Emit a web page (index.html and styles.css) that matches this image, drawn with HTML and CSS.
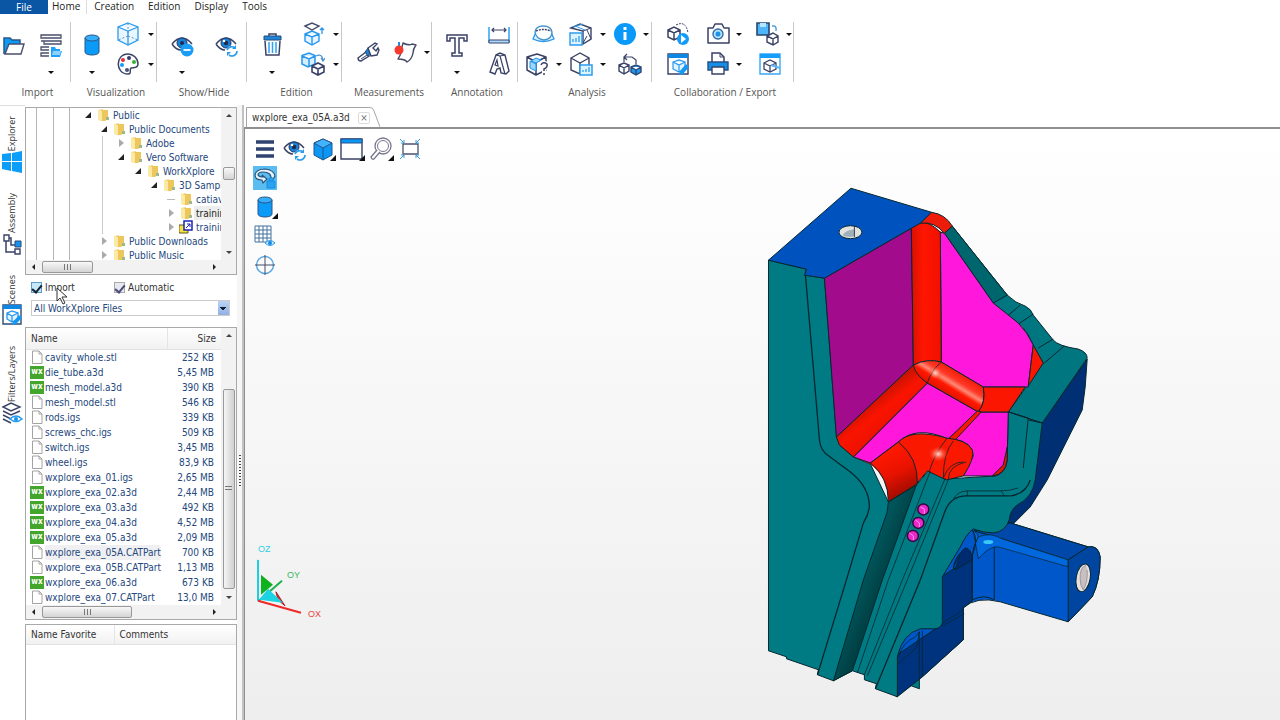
FILE: index.html
```html
<!DOCTYPE html>
<html lang="en">
<head>
    <meta charset="UTF-8">
    <meta name="viewport" content="width=device-width, initial-scale=1.0">
    <title>WorkXplore</title>
    <link rel="stylesheet" href="styles.css">
</head>
<body>
    <!-- shared icons -->
    <svg class="defs" aria-hidden="true">
        <symbol id="i-cylinder" viewBox="0 0 24 24"><path d="M5 5v14c0 4 14 4 14 0V5" fill="#0a9bf8" stroke="#2b5585"/><ellipse cx="12" cy="5" rx="7" ry="3" fill="#35aefb" stroke="#2b5585"/></symbol>
        <symbol id="i-eye-refresh" viewBox="0 0 24 24"><path d="M2 11Q12-1 22 11M2 11q4 6 9 6" fill="none" stroke="#3a4266" stroke-width="1.500"/><circle cx="12" cy="10" r="5" fill="#1583dd" stroke="#26365f"/><circle cx="12" cy="10" r="2.300" fill="#222a48"/><circle cx="10" cy="8" r="1.300" fill="#fff"/><circle cx="18" cy="18" r="5.500" fill="#fff"/><path d="M13 17a5 5 0 0 1 8-2M23 18a5 5 0 0 1-8 4" fill="none" stroke="#2a9cf0" stroke-width="1.600"/><path d="M22 12v4h-4zM13 23v-4h4z" fill="#2a9cf0"/></symbol>
        <symbol id="i-folder" viewBox="0 0 14 14"><path d="M2 2l5-1v12l-5-1z" fill="#f4d77a"/><path d="M5 2h7v9l-3 2H5z" fill="#edc65c"/><path d="M2 2l4 1v10l-4-1z" fill="#fbe9a4"/><path d="M10 9h3v3h-3z" fill="#9db88f"/></symbol>
        <symbol id="i-page" viewBox="0 0 14 14"><path d="M2.500 1h6.500l3 3v9.500H2.500z" fill="#fff" stroke="#a3a3a3"/><path d="M9 1v3h3" fill="none" stroke="#a3a3a3"/></symbol>
    </svg>

    <nav class="menu">
        <button class="file">File</button>
        <a href="#" class="current">Home</a>
        <a href="#">Creation</a>
        <a href="#">Edition</a>
        <a href="#">Display</a>
        <a href="#">Tools</a>
    </nav>

    <header class="ribbon">
        <section class="group g-import">
            <div class="tools">
                <div class="big"><button aria-label="Open"><svg viewBox="0 0 24 24"><path d="M2 21V5h6l2 2h8v4" fill="#0a9bf8" stroke="#2b5585" stroke-width="1.500"/><path d="M3 21l4-10h15l-3 10z" fill="#fff" stroke="#4a5070" stroke-width="1.400"/></svg></button></div>
                <div class="big"><button aria-label="Import list"><svg viewBox="0 0 24 24"><path d="M2 2h20v3H2zM2 8h20v3H5v-3M10 14H2v3h8M10 20H2v3h8" fill="none" stroke="#4a4f6c" stroke-width="1.300"/><path d="M12 14h4l1 2h4v2h2l-2 6h-9z" fill="#1da1fa"/><path d="M14 18h8l-1 4h-8z" fill="#8fd2ff"/></svg></button><button class="caret" aria-label="More"></button></div>
            </div>
            <h2>Import</h2>
        </section>
        <section class="group g-vis">
            <div class="tools">
                <div class="big"><button aria-label="Shading"><svg><use href="#i-cylinder"/></svg></button><button class="caret" aria-label="More"></button></div>
                <div class="stack">
                    <div class="tool"><button aria-label="Views"><svg viewBox="0 0 24 24"><path d="M12 1l10 4v13l-10 5-10-5V5zM2 5l10 4 10-4M12 9v14" fill="#eaf6ff" stroke="#2e9bea" stroke-width="1.300"/><path d="M12 1v12M12 14l-10 4M12 14l10 4" stroke="#4b93c9" stroke-dasharray="2 2"/></svg></button><button class="caret" aria-label="More"></button></div>
                    <div class="tool"><button aria-label="Colours"><svg viewBox="0 0 24 24"><path d="M12 2C-1 2-1 22 12 22c4 0 1-4 3-6 2-1 7 1 7-4 0-6-5-10-10-10z" fill="#fff" stroke="#3a4266" stroke-width="1.500"/><circle cx="7" cy="8" r="2" fill="#ee2a36"/><circle cx="13" cy="6" r="2" fill="#333c67"/><circle cx="18" cy="10" r="2" fill="#39b233"/><circle cx="6" cy="13" r="2" fill="#139cf5"/><circle cx="11" cy="18" r="2" fill="#4a5278"/></svg></button><button class="caret" aria-label="More"></button></div>
                </div>
            </div>
            <h2>Visualization</h2>
        </section>
        <section class="group g-show">
            <div class="tools">
                <div class="big"><button aria-label="Hide"><svg viewBox="0 0 24 24"><path d="M2 11Q12-1 22 11M2 11q4 6 9 6" fill="none" stroke="#3a4266" stroke-width="1.500"/><circle cx="12" cy="10" r="5" fill="#1583dd" stroke="#26365f"/><circle cx="12" cy="10" r="2" fill="#222a48"/><circle cx="17" cy="17" r="6.500" fill="#1b9df7"/><path d="M13.500 17h7" stroke="#fff" stroke-width="1.800"/></svg></button><button class="caret" aria-label="More"></button></div>
                <div class="big"><button aria-label="Invert visibility"><svg><use href="#i-eye-refresh"/></svg></button></div>
            </div>
            <h2>Show/Hide</h2>
        </section>
        <section class="group g-edit">
            <div class="tools">
                <div class="big"><button aria-label="Delete"><svg viewBox="0 0 24 24"><path d="M9 3V1h7v2" fill="none" stroke="#3a4266" stroke-width="1.500"/><path d="M5 8l1 14h13l1-14" fill="#fff" stroke="#3a4266" stroke-width="1.500"/><path d="M4 3h17v4H4z" fill="#1c86d8" stroke="#2b4a7a"/><path d="M9 9v11M12.500 9v11M16 9v11" stroke="#2da1f3" stroke-width="1.500"/></svg></button><button class="caret" aria-label="More"></button></div>
                <div class="stack">
                    <div class="tool"><button aria-label="Explode"><svg viewBox="0 0 24 24"><path d="M4 12l7-3 7 3v7l-7 4-7-4zM4 12l7 3 7-3M11 15v8" fill="#e6f5ff" stroke="#2797ed" stroke-width="1.400"/><path d="M4 4l7-3 7 3-7 4z" fill="#fff" stroke="#444a68" stroke-width="1.400"/><path d="M21 12V6m-2 2l2-2 2 2" fill="none" stroke="#2797ed" stroke-width="1.300"/></svg></button><button class="caret" aria-label="More"></button></div>
                    <div class="tool"><button aria-label="Move"><svg viewBox="0 0 24 24"><path d="M1 3.500L8 1l6 2.500V12l-7 3-6-3zM1 4l7 3 6-3M8 7v8" fill="#d5efff" stroke="#2797ed" stroke-width="1.500"/><path d="M11 14l6-3 6 3v6l-6 3-6-3zM11 14l6 3 6-3M17 17v6" fill="#fff" stroke="#3a4266" stroke-width="1.600"/><path d="M15 4q6-3 7 4m-2-2l2 3 2-3" fill="none" stroke="#4b96d0" stroke-width="1.300"/></svg></button><button class="caret" aria-label="More"></button></div>
                </div>
            </div>
            <h2>Edition</h2>
        </section>
        <section class="group g-meas">
            <div class="tools">
                <div class="tool"><button aria-label="Measure"><svg viewBox="0 0 24 24"><path d="M2 18l8-6 3 4-8 5q-3 0-3-3z" fill="#fff" stroke="#3a4266" stroke-width="1.400"/><path d="M5 19l6-4" stroke="#3a4266"/><path d="M9 12l3-4 4 5-4 3z" fill="#1b7fce" stroke="#2b4a7a"/><path d="M12 8l7-5 2 1-4 4 3 3 2-3 1 2-2 5-6 1z" fill="#fff" stroke="#3a4266" stroke-width="1.400"/></svg></button></div>
                <div class="tool"><button aria-label="Point coordinates"><svg viewBox="0 0 24 24"><path d="M9 3q6 3 9 1l4 1q-3 4-3 8-1 6-6 9-2-3-9-3 3-4 3-8z" fill="#fff" stroke="#454a64" stroke-width="1.400" stroke-linejoin="round"/><path d="M5 2v6" stroke="#208de0" stroke-width="2"/><circle cx="5" cy="10" r="4.500" fill="#f5392c"/></svg></button><button class="caret" aria-label="More"></button></div>
            </div>
            <h2>Measurements</h2>
        </section>
        <section class="group g-anno">
            <div class="tools">
                <div class="big"><button aria-label="Text"><svg viewBox="0 0 24 24"><path d="M2 2h20v6h-3V5h-5v15h3v3H7v-3h3V5H5v3H2z" fill="#fff" stroke="#3a4266" stroke-width="1.500"/></svg></button><button class="caret" aria-label="More"></button></div>
                <div class="stack">
                    <div class="tool"><button aria-label="Dimension"><svg viewBox="0 0 24 24"><path d="M2 5v16M22 5v16" stroke="#3ba8f4" stroke-width="1.600"/><path d="M5 8h14M7 6L5 8l2 2M17 6l2 2-2 2" fill="none" stroke="#3a4266" stroke-width="1.200"/><path d="M2 18h20v3H2z" fill="#acd9ff" stroke="#3a4266"/></svg></button></div>
                    <div class="tool"><button aria-label="Label"><svg viewBox="0 0 24 24"><path d="M9 3l4-2 5 2 4 16-3 3-5-1-1-5-3 1-2 5-5-2z" fill="#fff" stroke="#3a4266" stroke-width="1.400"/><path d="M9 3l4 1 5 18M13 4l5-1M8 13l3 1-1-6z" fill="none" stroke="#3a4266" stroke-width="1.200"/></svg></button></div>
                </div>
            </div>
            <h2>Annotation</h2>
        </section>
        <section class="group g-ana">
            <div class="tools">
                <div class="stack first">
                    <div class="tool"><button aria-label="Sphere analysis"><svg viewBox="0 0 24 24"><path d="M5 10L2 17q10 5 21 0l-3-7" fill="#dff1ff" stroke="#2797ed" stroke-width="1.300"/><path d="M4 10q1-6 8-6 8 0 9 6 0 7-8 8-8-1-9-8z" fill="#fff" stroke="#4293cc" stroke-width="1.400"/><path d="M5 9q7-3 15 0" fill="none" stroke="#3a4266" stroke-width="1.400" stroke-dasharray="2 1"/></svg></button></div>
                    <div class="tool"><button aria-label="Inspect"><svg viewBox="0 0 24 24"><path d="M12 2l9 3v13l-10 5-9-5V5zM2 5l9 5 10-5M11 10v13" fill="#fff" stroke="#3a4266" stroke-width="1.500" stroke-linejoin="round"/><path d="M5 9l6 3v7l-6-3zM11 6l5 2-5 3-5-2z" fill="#9ad7ff" stroke="#1e93eb"/><path d="M16 13q2-4 6-1 1 3-3 5v5" fill="none" stroke="#fff" stroke-width="4"/><path d="M16 13q2-4 6-1 1 3-3 5v2M19 21v2" fill="none" stroke="#3a4266" stroke-width="1.500"/></svg></button><button class="caret" aria-label="More"></button></div>
                </div>
                <div class="stack">
                    <div class="tool"><button aria-label="Thickness"><svg viewBox="0 0 24 24"><path d="M2 6l9-4 11 4v11l-8 5V9L2 6z" fill="#fff" stroke="#3a4266" stroke-width="1.400"/><path d="M14 9l8-3M18 8l4 9M14 21l4-7" stroke="#3a4266"/><path d="M6 4l10 4M4 5l10-3" stroke="#2c9ced"/><path d="M1 11h12v12H1z" fill="#dff3ff" stroke="#2c9ced" stroke-width="1.400"/><path d="M4 20v-3M7 20v-4M10 20v-6" stroke="#2c9ced" stroke-width="1.300"/></svg></button><button class="caret" aria-label="More"></button></div>
                    <div class="tool"><button aria-label="Draft"><svg viewBox="0 0 24 24"><path d="M2 6l9-5 9 5v12l-9 4-9-4zM2 6l9 5 9-5M11 11v11" fill="#fff" stroke="#3a4266" stroke-width="1.400"/><path d="M11 13h12v10H11z" fill="#dff3ff" stroke="#2c9ced" stroke-width="1.500"/><path d="M14 20v-2M17 20v-3M20 20v-5" stroke="#2c9ced" stroke-width="1.300"/></svg></button><button class="caret" aria-label="More"></button></div>
                </div>
                <div class="stack last">
                    <div class="tool"><button aria-label="Information"><svg viewBox="0 0 24 24"><circle cx="12" cy="12" r="11" fill="#0a99f8"/><path d="M12 10v8M12 5v3" stroke="#fff" stroke-width="3"/></svg></button><button class="caret" aria-label="More"></button></div>
                    <div class="tool shift"><button aria-label="Compare"><svg viewBox="0 0 24 24"><path d="M1 13l5-2 5 2v6l-5 3-5-3zM1 13l5 3 5-3M6 16v6" fill="#fff" stroke="#3a4266" stroke-width="1.400"/><path d="M13 15l5-2 5 2v5l-5 3-5-3zM13 15l5 3 5-3M18 18v5" fill="#2198ee" stroke="#2b4a7a" stroke-width="1.400"/><path d="M6 10V5h8l4 3v4M9 2L6 5l3 3" fill="none" stroke="#3a4266" stroke-width="1.200"/></svg></button></div>
                </div>
            </div>
            <h2>Analysis</h2>
        </section>
        <section class="group g-collab">
            <div class="tools">
                <div class="stack first">
                    <div class="tool"><button aria-label="Animate"><svg viewBox="0 0 24 24"><path d="M2 8l6-3 6 3v7l-6 3-6-3zM2 8l6 3 6-3M8 11v7" fill="#fff" stroke="#3a4266" stroke-width="1.500"/><path d="M10 3q10-5 12 8" fill="none" stroke="#3a4266" stroke-dasharray="2 1"/><circle cx="17" cy="17" r="6" fill="#149bf7"/><path d="M15 13l5 4-5 4z" fill="#fff"/></svg></button></div>
                    <div class="tool"><button aria-label="Edit scene"><svg viewBox="0 0 24 24"><path d="M2 2h20v20H2z" fill="#fff" stroke="#3a4266" stroke-width="1.400"/><path d="M2 2h20v4H2z" fill="#0e87e2"/><path d="M7 10l6-2 6 2v7l-6 3-6-3zM7 10l6 3 6-3M13 13v7" fill="#e2f4ff" stroke="#2797ed" stroke-width="1.200"/><path d="M14 19l6-7 3 3-6 7-4 1z" fill="#1598f4"/></svg></button></div>
                </div>
                <div class="stack">
                    <div class="tool"><button aria-label="Snapshot"><svg viewBox="0 0 24 24"><path d="M2 6h5l2-4h7l2 4h5v15H2z" fill="#fff" stroke="#3a4266" stroke-width="1.500" stroke-linejoin="round"/><circle cx="12" cy="12" r="5" fill="#b6e2ff" stroke="#356da4" stroke-width="1.400"/><circle cx="12" cy="12" r="2.500" fill="#1b92e8"/></svg></button><button class="caret" aria-label="More"></button></div>
                    <div class="tool"><button aria-label="Print"><svg viewBox="0 0 24 24"><path d="M6 11V1h8l4 4v6" fill="#fff" stroke="#3a4266" stroke-width="1.500"/><path d="M14 1v4h4" fill="none" stroke="#3a4266"/><path d="M2 10h20v8H2z" fill="#138fe8" stroke="#274f85" stroke-width="1.400"/><path d="M6 15h12v7H6z" fill="#fff" stroke="#3a4266" stroke-width="1.400"/></svg></button><button class="caret" aria-label="More"></button></div>
                </div>
                <div class="stack">
                    <div class="tool"><button aria-label="Export"><svg viewBox="0 0 24 24"><path d="M1 1h12v12H1z" fill="#4db6fa" stroke="#26456f" stroke-width="1.600"/><path d="M4 1h6v4H4z" fill="#b9e4ff"/><path d="M11 14l6-3 5 3v6l-5 3-6-3zM11 14l6 3 5-3M17 17v6" fill="#fff" stroke="#3a4266" stroke-width="1.400"/><path d="M16 4q5-1 4 5" fill="none" stroke="#3a95dc" stroke-width="1.300"/></svg></button><button class="caret" aria-label="More"></button></div>
                    <div class="tool shift"><button aria-label="Publish"><svg viewBox="0 0 24 24"><path d="M2 2h20v20H2z" fill="#fff" stroke="#38a7f5" stroke-width="1.400"/><path d="M2 2h20v4H2z" fill="#159ffa"/><path d="M6 11l6-3 6 3v6l-6 3-6-3zM6 11l6 3 6-3M12 14v6" fill="#fff" stroke="#3a4266" stroke-width="1.300"/><path d="M13 13l9 3" stroke="#5ab8f8" stroke-width="2"/></svg></button></div>
                </div>
            </div>
            <h2>Collaboration / Export</h2>
        </section>
    </header>

    <main class="workspace">
        <nav class="side-tabs">
            <button class="side-tab"><span>Explorer</span><svg viewBox="0 0 22 22"><path d="M1 3l9-1v8H1zM11 2l10-2v10H11zM1 11h9v9l-9-2zM11 11h10v11l-10-2z" fill="#0c9df8"/></svg></button>
            <button class="side-tab"><span>Assembly</span><svg viewBox="0 0 22 22"><path d="M5 8v11h9M7 5h3v7h4" fill="none" stroke="#3a4266" stroke-width="1.500"/><path d="M3 2h5v6H3zM14 16h5v5h-5z" fill="#fff" stroke="#3a4266" stroke-width="1.400"/><path d="M14 8h6v6h-6z" fill="#1493ef" stroke="#2c4b7b"/></svg></button>
            <button class="side-tab"><span>Scenes</span><svg viewBox="0 0 22 22"><path d="M2 1h18v19H2z" fill="#fff" stroke="#2c4b7b" stroke-width="1.400"/><path d="M2 1h18v4H2z" fill="#0e87e2"/><path d="M6 9l5-2 6 2v6l-6 3-5-3zM6 9l5 3 6-3M11 12v6" fill="#e2f4ff" stroke="#2797ed" stroke-width="1.300"/><path d="M12 18l6-7 3 3-6 6-4 1z" fill="#1598f4"/></svg></button>
            <button class="side-tab"><span>Filters/Layers</span><svg viewBox="0 0 22 22"><path d="M2 5l8-4 9 4-9 4zM2 9l8 4 9-4M2 13l8 4 5-2M2 17l8 4" fill="none" stroke="#3a4266" stroke-width="1.400"/><path d="M9 17q6-6 12 0-6 5-12 0z" fill="#fff" stroke="#1d99f2" stroke-width="1.400"/><circle cx="15" cy="17" r="2" fill="#1490ea"/></svg></button>
        </nav>

        <aside class="explorer">
            <div class="panel tree-panel">
                <ul class="tree">
                    <li class="l0"><i class="open"></i><svg><use href="#i-folder"/></svg>Public</li>
                    <li class="l1"><i class="open"></i><svg><use href="#i-folder"/></svg>Public Documents</li>
                    <li class="l2"><i class="closed"></i><svg><use href="#i-folder"/></svg>Adobe</li>
                    <li class="l2"><i class="open"></i><svg><use href="#i-folder"/></svg>Vero Software</li>
                    <li class="l3"><i class="open"></i><svg><use href="#i-folder"/></svg>WorkXplore</li>
                    <li class="l4"><i class="open"></i><svg><use href="#i-folder"/></svg>3D Sample</li>
                    <li class="l5"><i class="leaf"></i><svg><use href="#i-folder"/></svg>catiav</li>
                    <li class="l5 selected"><i class="closed"></i><svg><use href="#i-folder"/></svg>trainin</li>
                    <li class="l5"><i class="closed"></i><svg viewBox="0 0 14 14"><path d="M0 5h9v8H0z" fill="#f5e23c" stroke="#5e5920"/><path d="M5 1h8v9H5z" fill="#fff" stroke="#1d23b8" stroke-width="1.500"/><path d="M7 8l4-4M8 4h3v3" fill="none" stroke="#1d23b8"/></svg>trainin</li>
                    <li class="l1"><i class="closed"></i><svg><use href="#i-folder"/></svg>Public Downloads</li>
                    <li class="l1"><i class="closed"></i><svg><use href="#i-folder"/></svg>Public Music</li>
                </ul>
                <div class="vscroll"><i class="up"></i><b class="thumb tree-v"></b><i class="down"></i></div>
                <div class="hscroll"><i class="left"></i><b class="thumb tree-h"></b><i class="right"></i></div>
            </div>

            <div class="options">
                <label><input type="checkbox" checked>Import</label>
                <label class="dim"><input type="checkbox" checked>Automatic</label>
                <svg class="pointer" viewBox="0 0 12 18"><path d="M1 1v13l3-3 3 6 2-1-3-6h5z" fill="#fff" stroke="#333"/></svg>
            </div>
            <select class="filter" aria-label="File type">
                <option>All WorkXplore Files</option>
            </select>

            <div class="panel files-panel">
                <table class="files">
                    <thead><tr><th>Name</th><th class="size">Size</th></tr></thead>
                    <tbody>
                        <tr><td><svg><use href="#i-page"/></svg><span>cavity_whole.stl</span></td><td>252 KB</td></tr>
                        <tr><td><b class="wx">wx</b><span>die_tube.a3d</span></td><td>5,45 MB</td></tr>
                        <tr><td><b class="wx">wx</b><span>mesh_model.a3d</span></td><td>390 KB</td></tr>
                        <tr><td><svg><use href="#i-page"/></svg><span>mesh_model.stl</span></td><td>546 KB</td></tr>
                        <tr><td><svg><use href="#i-page"/></svg><span>rods.igs</span></td><td>339 KB</td></tr>
                        <tr><td><svg><use href="#i-page"/></svg><span>screws_chc.igs</span></td><td>509 KB</td></tr>
                        <tr><td><svg><use href="#i-page"/></svg><span>switch.igs</span></td><td>3,45 MB</td></tr>
                        <tr><td><svg><use href="#i-page"/></svg><span>wheel.igs</span></td><td>83,9 KB</td></tr>
                        <tr><td><svg><use href="#i-page"/></svg><span>wxplore_exa_01.igs</span></td><td>2,65 MB</td></tr>
                        <tr><td><b class="wx">wx</b><span>wxplore_exa_02.a3d</span></td><td>2,44 MB</td></tr>
                        <tr><td><b class="wx">wx</b><span>wxplore_exa_03.a3d</span></td><td>492 KB</td></tr>
                        <tr><td><b class="wx">wx</b><span>wxplore_exa_04.a3d</span></td><td>4,52 MB</td></tr>
                        <tr><td><b class="wx">wx</b><span>wxplore_exa_05.a3d</span></td><td>2,09 MB</td></tr>
                        <tr class="hover"><td><svg><use href="#i-page"/></svg><span>wxplore_exa_05A.CATPart</span></td><td>700 KB</td></tr>
                        <tr><td><svg><use href="#i-page"/></svg><span>wxplore_exa_05B.CATPart</span></td><td>1,13 MB</td></tr>
                        <tr><td><b class="wx">wx</b><span>wxplore_exa_06.a3d</span></td><td>673 KB</td></tr>
                        <tr><td><svg><use href="#i-page"/></svg><span>wxplore_exa_07.CATPart</span></td><td>13,0 MB</td></tr>
                    </tbody>
                </table>
                <div class="vscroll"><i class="up"></i><b class="thumb files-v"></b><i class="down"></i></div>
                <div class="hscroll"><i class="left"></i><b class="thumb files-h"></b><i class="right"></i></div>
            </div>

            <div class="panel favorites">
                <table>
                    <thead><tr><th>Name Favorite</th><th>Comments</th></tr></thead>
                </table>
            </div>
        </aside>

        <div class="splitter"><i></i></div>

        <section class="document">
            <div class="doc-tabs">
                <svg class="tab-shape" viewBox="0 0 134 20" preserveAspectRatio="none"><path d="M.5 20V.5H124Q127 .5 128 4l6 16" fill="#fff" stroke="#a5a5a5"/></svg>
                <span>wxplore_exa_05A.a3d</span>
                <button aria-label="Close">&#10799;</button>
            </div>
            <div class="viewer">
                <svg class="scene" viewBox="244 129 1036 591" role="img" aria-label="3D part">
                    <defs>
                        <linearGradient id="tube" x1="0" x2="1"><stop offset="0" stop-color="#d81000"/><stop offset=".4" stop-color="#ff1600"/><stop offset="1" stop-color="#f01000"/></linearGradient>
                        <linearGradient id="diag" gradientUnits="userSpaceOnUse" x1="868" y1="402" x2="886" y2="425"><stop offset="0" stop-color="#c81200"/><stop offset=".5" stop-color="#fa1400"/><stop offset="1" stop-color="#ee1200"/></linearGradient>
                        <linearGradient id="corner" gradientUnits="userSpaceOnUse" x1="966" y1="374" x2="950" y2="400"><stop offset="0" stop-color="#f01500"/><stop offset=".35" stop-color="#ff3828"/><stop offset=".5" stop-color="#ff8a76"/><stop offset=".65" stop-color="#ff1800"/><stop offset="1" stop-color="#d80e00"/></linearGradient>
                        <linearGradient id="elbow" gradientUnits="userSpaceOnUse" x1="884" y1="453" x2="904" y2="494"><stop offset="0" stop-color="#ff1800"/><stop offset=".5" stop-color="#e81200"/><stop offset="1" stop-color="#a00c00"/></linearGradient>
                        <linearGradient id="groove" gradientUnits="userSpaceOnUse" x1="866" y1="570" x2="886" y2="578"><stop offset="0" stop-color="#00555a"/><stop offset="1" stop-color="#003f43"/></linearGradient>
                        <radialGradient id="spot"><stop offset="0" stop-color="#ffe0d4"/><stop offset="1" stop-color="#ff2c14" stop-opacity="0"/></radialGradient>
                    </defs>
                    <g class="part" stroke="#06262e" stroke-linejoin="round">
                        <!-- rear body and arm -->
                        <path d="M1042 423L1087 359 1085 387 1082 410 1047 480 1030 507 1010 527 1000 537z" fill="#002f74"/>
                        <path d="M919 640v49l-22-8z" fill="#007b84"/>
                        <path d="M1010 523l78 24q10-2 12 10 0 24-8 40l-24 25-68-20q-24-6-37 6v32l-41 37-26 20V640l60-110z" fill="#0057ca"/>
                        <path d="M1010 523l78 24-20 13-66-21-28-8z" fill="#0048a9"/>
                        <path d="M973 531q5 2 5 6 12-5 24 2l66 21v7l-70-20q-9-1-20 12z" fill="#0067dd" stroke-width=".7"/>
                        <path d="M941 577l31-20v44l-9 7v32l-41 37-25 20V655l44-30z" fill="#00337e"/>
                        <path d="M972 530q7 10 0 25v45M994 547v53M978 537q-6 10-6 20M972 600q12-6 22 0" fill="none"/>
                        <path d="M953 570q0-12 12-22 6 0 7 12l-17 10 4-14" fill="#002b70"/>
                        <path d="M963 610l-22 14M964 614l-22 12" stroke-width=".7"/>
                        <path d="M1088 547q10-2 12 10 0 24-8 40l-24 25v-62z" fill="#0046a0"/>
                        <ellipse cx="1083" cy="578" rx="7" ry="14" fill="#e7e0e0" transform="rotate(10 1083 578)"/>
                        <path d="M1086 565q-7 3-6 15 0 6 3 10 5-8 4-20" fill="#c9bfc0" stroke="#777" stroke-width=".6"/>
                        <ellipse cx="988" cy="542" rx="5" ry="2" fill="#3cc6f5" stroke="none"/>
                        <!-- teal faces -->
                        <path d="M952 226L1007 295Q1015 303 1025 306 1031 309 1033 315L1053 340Q1058 346 1078 349 1087 352 1087 358L1042 423 1008 412 1043 363 1033 345Q1027 330 1018 323 1007 314 993 303L944 233z" fill="#007780"/>
                        <path d="M952 226L1007 295 993 303 944 233z" fill="#00666e"/>
                        <path d="M1007 316l13-11M1018 324l15-10M1038 348l15-9M1044 363l20-17" fill="none"/>
                        <path d="M768 260L806 269 805 275 824 278 836 436 839 445 853 457 870 464 888 502 916 485 928 471 946 479 995 476Q1006 473 1007 460L1008 412 1042 423 1035 480Q1032 498 1017 505 1010 510 1009 520 1005 532 993 533 983 533 973 529 966 534 960 547L942 577V623Q940 629 934 629H920Q902 634 897 657V697L875 689 876 684 864 680V675L852 671 833 681 817 675 818 670 786 659V657L768 651z" fill="#007b84"/>
                        <path d="M1009 412l19 6-5 50M1028 420l14 3" fill="none"/>
                        <!-- inner pocket -->
                        <path d="M911 228L920 221 944 233 941 250z" fill="#f01400" stroke="none"/>
                        <path d="M839 444L913 380V440L888 500Q887 477 870 464L853 457z" fill="#e81200" stroke="none"/>
                        <path d="M824 278L911 228 913 365 836 437z" fill="#a20c8c"/>
                        <path d="M940 232L944 233 993 303Q1007 314 1018 323 1027 332 1033 345L1028 387H983L941 362z" fill="#ff18dc"/>
                        <path d="M927 383l51 29-30 27q-32-14-50 3l-28 21-17-6z" fill="#ff18dc"/>
                        <path d="M978 412h30l-1 43q-2 21-13 21h-31l10-20q0-14-20-17z" fill="#ff18dc"/>
                        <path d="M913 365L836 437 839 445 853 457 927 383z" fill="url(#diag)"/>
                        <path d="M911 228q12-13 29 4l1 130q-14-4-28 3z" fill="url(#tube)"/>
                        <path d="M931 212q14 2 21 14l-8 7q-10-12-24-10z" fill="#ed1b0a"/>
                        <path d="M941 362l42 25q3 14-5 25l-51-29q-12-8-14-18 14-7 28-3z" fill="url(#corner)"/>
                        <path d="M983 387h42l-17 25h-30q8-10 5-25zM1033 345l10 18-15 23z" fill="#fa1600"/>
                        <path d="M977 411l-29 28 5 3 28-30z" fill="#fa1600"/>
                        <path d="M898 442Q912 428 946 438 967 440 972 450 975 458 963 476L946 480 927 471 916 484z" fill="#fb1800"/>
                        <path d="M870 463L898 442Q918 458 917 484L888 502Q888 477 870 463z" fill="url(#elbow)"/>
                        <path d="M941 362q-10 8-14 21M947 438q-12 14-18 33M953 441q-10 12-10 37M966 462q-18 4-18 17M963 462q-14 0-20 16" fill="none" stroke-width=".8"/>
                        <path d="M992 476l11-11 4-18v13q-2 15-15 16z" fill="#e31400"/>
                        <ellipse cx="938" cy="454" rx="10" ry="8" fill="url(#spot)" stroke="none"/>
                        <ellipse cx="935" cy="373" rx="7" ry="7" fill="url(#spot)" stroke="none"/>
                        <!-- groove and rib lines -->
                        <path d="M888 502L916 485 882 580 852 671 833 681 863 580 883 523Q888 512 888 502z" fill="url(#groove)"/>
                        <path d="M805 275L819 440Q820 450 827 455L850 472Q869 487 869 507 868 515 863 523L846 580 817 675" fill="none" stroke-width="1.300"/>
                        <path d="M1030 480Q1026 493 1011 496H966Q950 496 944 513L920 580 875 689" fill="none" stroke-width="1.300"/>
                        <path d="M930 471L888 580 857 673M945 478L902 580 864 675M948 480L907 580 867 676M1018 488Q1010 491 1000 491H966Q957 492 953 499M967 491v5M1001 491l3 5" fill="none" stroke-width=".8"/>
                        <path d="M898 657q4-14 17-20l4-5M898 664l18-16 3-16M919 632v46M922 631v46" fill="none" stroke-width=".8"/>
                        <g fill="#ec28ca" stroke="#320a3c" stroke-width="1.500"><circle cx="923" cy="509.500" r="5.500"/><circle cx="918" cy="523" r="5.500"/><circle cx="912.500" cy="536" r="5.500"/></g>
                        <path d="M920 507l4 2v5M915 520l4 3v4M909 533l4 3v4" fill="none" stroke="#ff96ef"/>
                        <!-- top -->
                        <path d="M850.500 188L931 212 920 223 911 228 824 278 804 275 806 269 768 260z" fill="#0053bf"/>
                        <ellipse cx="850" cy="232" rx="11.500" ry="6.500" fill="#e2e2e2"/>
                        <path d="M842 235q3-5 12-6v-2 9q-6 2-12-1z" fill="#9fb0b8" stroke="none"/>
                        <path d="M854 226v11" stroke-width=".8"/>
                    </g>
                    <!-- axes -->
                    <g fill="none" stroke-width="2"><path d="M257 560v41" stroke="#1ccfe0"/><path d="M258 601l23-20" stroke="#1db04a"/><path d="M257 601l43 12" stroke="#f02828"/></g>
                    <path d="M275 592l9 14-7-6z" fill="#f02828" stroke="#a02020"/>
                    <path d="M260 575l12 10-12 10z" fill="#0eb21c"/><path d="M258 600l9-11 15 14z" fill="#1cd3e4"/>
                    <g class="axis"><text x="257" y="552" fill="#30cfe0">OZ</text><text x="286" y="578" fill="#35b860">OY</text><text x="307" y="617" fill="#f04040">OX</text></g>
                </svg>

                <div class="view-tools">
                    <button aria-label="Menu"><svg viewBox="0 0 24 24"><path d="M3 5h18M3 12h18M3 19h18" stroke="#2f4370" stroke-width="3.500"/></svg></button>
                    <button aria-label="Invert visibility"><svg><use href="#i-eye-refresh"/></svg></button>
                    <button class="more" aria-label="Orientation"><svg viewBox="0 0 24 24"><path d="M12 2l9 4v12l-9 5-9-5V6z" fill="#0b97f3" stroke="#25548a"/><path d="M12 2l9 4-9 5-9-5z" fill="#41b4ff" stroke="#25548a"/><path d="M12 11v12" stroke="#25548a"/></svg></button>
                    <button class="more" aria-label="Windows"><svg viewBox="0 0 24 24"><path d="M1 2h21v20H1z" fill="#fff" stroke="#3a4266" stroke-width="1.400"/><path d="M1 2h21v4H1z" fill="#0b97f3" stroke="#25548a"/></svg></button>
                    <button class="more" aria-label="Zoom"><svg viewBox="0 0 24 24"><circle cx="14" cy="9" r="8" fill="#fff" stroke="#77788d" stroke-width="1.300"/><circle cx="14" cy="9" r="5.500" fill="#fff" stroke="#77788d"/><path d="M8 13l-6 7q1 3 3 2l6-7" fill="#fff" stroke="#77788d" stroke-width="1.300"/></svg></button>
                    <button aria-label="Fit"><svg viewBox="0 0 24 24"><path d="M5 7h15v10H5z" fill="#fff" stroke="#4c5370" stroke-width="1.300"/><path d="M2 2l4 4M6 3v3H3M22 2l-4 4M18 3v3h3M2 22l4-4M6 21v-3H3M22 22l-4-4M18 21v-3h3" stroke="#3b9cdc" fill="none"/></svg></button>
                    <button class="on" aria-label="Rotate"><svg viewBox="0 0 24 24"><path d="M9 14q-7 0-7-5 1-6 10-6 9 1 10 7-1 3-4 4 1-8-8-8-5 0-5 3 1 2 5 2l-1-2 5 4-4 4z" fill="#e4f5ff" stroke="#2c5277" stroke-width="1.200"/><path d="M14 15h8v7h-8zM16 15v-3h4v3" fill="#2aa3f2" stroke="#178fe0"/></svg></button>
                    <button class="more" aria-label="Shading"><svg><use href="#i-cylinder"/></svg></button>
                    <button aria-label="Grid"><svg viewBox="0 0 24 24"><path d="M2 2h16v16H2zM6 2v16M10 2v16M14 2v16M2 6h16M2 10h16M2 14h16" fill="#fff" stroke="#41729f"/><path d="M12 19q5-5 10 0-5 5-10 0z" fill="#c6e9ff" stroke="#2a9cec"/><circle cx="17" cy="19" r="2" fill="#1689df"/></svg></button>
                    <button aria-label="Centre"><svg viewBox="0 0 24 24"><circle cx="12" cy="12" r="8.500" fill="none" stroke="#5aa6dd" stroke-width="1.400"/><path d="M12 2v20M2 12h20" stroke="#444b66"/></svg></button>
                </div>
            </div>
        </section>
    </main>
</body>
</html>
```
FILE: styles.css
```css
* {
    box-sizing: border-box;
}
body {
    margin: 0;
    height: 100vh;
    display: flex;
    flex-direction: column;
    overflow: hidden;
    background: #fff;
    color: #333;
    font-family: "Open Sans", "Noto Sans", sans-serif;
    font-size: 10px;
}
button {
    margin: 0;
    padding: 0;
    border: 0;
    background: none;
    font: inherit;
    color: inherit;
    cursor: pointer;
}
svg {
    display: block;
}
.defs {
    position: absolute;
    width: 0;
    height: 0;
}

/* menu bar */
.menu {
    display: flex;
    flex: none;
    height: 14px;
    line-height: 12px;
}
.menu .file {
    width: 48px;
    margin-right: 1px;
    background: #0a56a5;
    color: #fff;
    line-height: 13px;
}
.menu a {
    padding: 0 7px;
    color: #222;
    text-decoration: none;
}
.menu .current {
    padding: 0 6px 0 3px;
    border-right: 1px solid #ddd;
}

/* ribbon */
.ribbon {
    display: flex;
    flex: none;
    height: 91px;
    padding-top: 8px;
}
.group {
    flex: none;
}
.tools {
    display: flex;
    height: 60px;
    border-right: 1px solid #c8c8c8;
}
.group h2 {
    margin: 3px 0 0;
    padding-left: 4px;
    font-size: 10px;
    line-height: 15px;
    font-weight: normal;
    text-align: center;
    white-space: nowrap;
    color: #555;
}
.tools svg {
    width: 24px;
    height: 24px;
}
.big {
    display: flex;
    flex-direction: column;
    align-items: center;
    padding-top: 11px;
    gap: 10px;
}
.stack {
    display: flex;
    flex-direction: column;
    gap: 6px;
}
.tool {
    display: flex;
    align-items: center;
    gap: 6px;
}
.caret {
    width: 10px;
    height: 10px;
    display: flex;
    align-items: center;
    justify-content: center;
}
.caret::before {
    content: "";
    border: 3px solid transparent;
    border-top-color: #111;
    border-bottom: 0;
}
.g-import { width: 71px; }
.g-import .tools { padding-left: 2px; gap: 13px; }
.g-vis { width: 86px; }
.g-vis .tools { padding-left: 9px; gap: 12px; }
.g-show { width: 90px; }
.g-show .tools { padding-left: 13px; gap: 20px; }
.g-edit { width: 95px; }
.g-edit .tools { padding-left: 13px; gap: 17px; }
.g-meas { width: 90px; }
.g-meas .tools { padding-left: 14px; gap: 14px; }
.g-meas .tool { gap: 4px; }
.g-anno { width: 86px; }
.g-anno .tools { padding-left: 13px; gap: 18px; }
.g-ana { width: 134px; }
.g-ana .tools { padding-left: 7px; gap: 5px; }
.g-ana .tool { gap: 5px; }
.g-ana .first .tool:first-child { padding-left: 6px; }
.g-ana .last .tool { gap: 4px; }
.g-ana .shift { padding-left: 5px; }
.g-collab { width: 142px; }
.g-collab .tools { padding-left: 14px; gap: 12px; }
.g-collab .tool { gap: 4px; }
.g-collab .first { margin-right: 4px; }
.g-collab .shift { padding-left: 2px; }

/* workspace */
.workspace {
    display: flex;
    flex: 1;
    min-height: 0;
}
.side-tabs {
    width: 25px;
    flex: none;
    padding-top: 3px;
    border-top: 1px solid #ddd;
}
.side-tab {
    display: flex;
    flex-direction: column;
    align-items: center;
    width: 24px;
    padding: 7px 0 13px;
}
.side-tab span {
    writing-mode: vertical-rl;
    transform: rotate(180deg);
    font-size: 9px;
    line-height: 14px;
}
.side-tab svg {
    width: 22px;
    height: 22px;
}
.explorer {
    width: 212px;
    flex: none;
    display: flex;
    flex-direction: column;
    padding-top: 2px;
    font-family: "DejaVu Sans Condensed", "DejaVu Sans", sans-serif;
    font-size: 10px;
    color: #24477d;
}
.panel {
    border: 1px solid #a9a9a9;
    background: #fff;
    display: grid;
    grid-template-columns: minmax(0, 1fr) 15px;
    grid-template-rows: minmax(0, 1fr) 14px;
}
.tree-panel {
    height: 168px;
}
.tree {
    list-style: none;
    margin: 0;
    padding: 0;
    overflow: hidden;
    white-space: nowrap;
    background:
        linear-gradient(#b5b5b5, #b5b5b5) 10px 0 / 1px 100% no-repeat,
        linear-gradient(#b5b5b5, #b5b5b5) 27px 0 / 1px 100% no-repeat,
        linear-gradient(#b5b5b5, #b5b5b5) 43px 0 / 1px 100% no-repeat,
        linear-gradient(#ccc, #ccc) 76px 28px / 1px 98px no-repeat;
}
.tree li {
    display: flex;
    align-items: center;
    gap: 3px;
    height: 14px;
    line-height: 15px;
}
.tree svg {
    width: 14px;
    height: 14px;
    flex: none;
}
.tree i {
    width: 10px;
    flex: none;
    display: flex;
    justify-content: center;
}
.tree .open::before {
    content: "";
    border-left: 6px solid transparent;
    border-bottom: 6px solid #222;
}
.tree .closed::before {
    content: "";
    border: 4px solid transparent;
    border-left: 5px solid #aaa;
    border-right: 0;
}
.tree .leaf::before {
    content: "";
    width: 8px;
    height: 1px;
    background: #bbb;
}
.tree .selected {
    color: #222;
    background: linear-gradient(90deg, transparent 168px, #eee 168px);
}
.l0 { padding-left: 57px; }
.l1 { padding-left: 73px; }
.l2 { padding-left: 90px; }
.l3 { padding-left: 107px; }
.l4 { padding-left: 123px; }
.l5 { padding-left: 140px; }

/* scroll bars */
.vscroll,
.hscroll {
    display: flex;
    align-items: center;
    background: #f2f2f2;
}
.vscroll {
    flex-direction: column;
    padding: 6px 0;
}
.hscroll {
    grid-column: 1 / -1;
    padding: 0 20px 0 6px;
}
.vscroll i,
.hscroll i {
    border: 3px solid transparent;
    flex: none;
}
.vscroll .up { border-bottom-color: #444; border-top: 0; }
.vscroll .down { border-top-color: #444; border-bottom: 0; margin-top: auto; }
.hscroll .left { border-right-color: #222; border-left: 0; }
.hscroll .right { border-left-color: #222; border-right: 0; margin-left: auto; }
.thumb {
    border: 1px solid #999;
    border-radius: 2px;
    background: linear-gradient(#f8f8f8, #d4d4d4);
    display: flex;
    align-items: center;
    justify-content: center;
}
.thumb::before {
    content: "";
    width: 7px;
    height: 6px;
    background: repeating-linear-gradient(90deg, #777 0 1px, transparent 1px 3px);
}
.tree-v { width: 12px; height: 13px; margin-top: 50px; }
.tree-v::before { display: none; }
.tree-h { width: 51px; height: 12px; margin-left: 7px; }
.files-v { width: 12px; flex: 1; margin: 52px 0 7px; background: linear-gradient(90deg, #f5f5f5, #d0d0d0); }
.files-v::before { background: repeating-linear-gradient(#777 0 1px, transparent 1px 3px); }
.vscroll .files-v + .down { margin-top: 0; }
.files-h { width: 90px; height: 12px; margin-left: 7px; }

/* import options */
.options {
    position: relative;
    display: flex;
    height: 25px;
    padding: 5px 0 0 6px;
    color: #333;
}
.options label {
    display: flex;
    align-items: center;
    gap: 3px;
    width: 83px;
    height: 14px;
}
.options input {
    appearance: none;
    width: 11px;
    height: 11px;
    margin: 0;
    border: 1px solid #5f9cc4;
    background: #c5e9fb;
    display: flex;
    justify-content: center;
}
.options input:checked::before {
    content: "";
    width: 4px;
    height: 8px;
    border: solid #123;
    border-width: 0 2px 2px 0;
    transform: rotate(40deg);
}
.options .dim input {
    border-color: #aaa;
    background: #e8e8f0;
}
.options .dim input::before {
    border-color: #4a4a78;
}
.pointer {
    position: absolute;
    left: 31px;
    top: 12px;
    width: 12px;
    height: 18px;
}
.filter {
    flex: none;
    appearance: none;
    width: 199px;
    height: 16px;
    margin: 0 0 0 6px;
    padding: 0 2px;
    border: 1px solid #ccc;
    border-radius: 0;
    background:
        linear-gradient(#123, #123) right 3px top 6px / 6px 1px no-repeat,
        linear-gradient(#123, #123) right 4px top 7px / 4px 1px no-repeat,
        linear-gradient(#123, #123) right 5px top 8px / 2px 1px no-repeat,
        linear-gradient(#bcd4f6, #90b0e4) right / 11px 100% no-repeat,
        #fff;
    color: #24477d;
    font: inherit;
}

/* file list */
.files-panel {
    margin-top: 11px;
    flex: none;
}
table {
    width: 100%;
    border-collapse: collapse;
}
th {
    height: 21px;
    padding: 1px 5px 0;
    text-align: left;
    font-weight: normal;
    color: #333;
    background: linear-gradient(#fff, #f1f1f1);
    border-bottom: 1px solid #e2e2e2;
}
.files .size {
    border-left: 1px solid #e5e5e5;
    text-align: right;
    width: 54px;
}
.files td {
    height: 15px;
    padding: 0 7px 0 4px;
    white-space: nowrap;
    line-height: 15px;
}
.files td:first-child {
    display: flex;
    align-items: center;
    gap: 1px;
    padding-right: 0;
}
.files td:last-child {
    text-align: right;
    padding-left: 0;
}
.files svg {
    width: 14px;
    height: 14px;
    flex: none;
}
.wx {
    width: 14px;
    height: 13px;
    flex: none;
    background: #43a52b;
    color: #fff;
    font-size: 8px;
    line-height: 11px;
    text-align: center;
}
.hover span {
    background: #f0f0f2;
    border-radius: 2px;
}
.favorites {
    flex: 1;
    display: block;
    margin-top: 4px;
    border-bottom: 0;
}
.favorites th + th {
    border-left: 1px solid #e5e5e5;
}
.favorites th {
    height: 20px;
}
.favorites th:first-child {
    width: 88px;
}

.splitter {
    width: 7px;
    flex: none;
    display: flex;
    align-items: center;
    justify-content: center;
    background: #f6f6f6;
    border-right: 2px solid #c2c2c2;
}
.splitter i {
    width: 2px;
    height: 31px;
    margin-top: 116px;
    background: repeating-linear-gradient(#444 0 1px, transparent 1px 3px);
}

/* document */
.document {
    flex: 1;
    min-width: 0;
    display: flex;
    flex-direction: column;
}
.doc-tabs {
    position: relative;
    align-self: flex-start;
    display: flex;
    align-items: center;
    height: 20px;
    width: 134px;
    margin: 2px 0 0 2px;
    padding: 1px 10px 0 6px;
    justify-content: space-between;
    font-family: "DejaVu Sans Condensed", "DejaVu Sans", sans-serif;
}
.tab-shape {
    position: absolute;
    inset: 0;
    width: 100%;
    height: 100%;
    z-index: -1;
}
.doc-tabs button {
    width: 12px;
    height: 12px;
    border: 1px solid #ddd;
    border-radius: 2px;
    line-height: 10px;
    color: #777;
}
.viewer {
    position: relative;
    flex: 1;
    min-height: 0;
    border-top: 2px solid #8f8f8f;
    border-left: 1px solid #8f8f8f;
    background: linear-gradient(#fff, #eee);
}
.scene {
    position: absolute;
    inset: 0;
    width: 100%;
    height: 100%;
}
.axis {
    font-family: "Liberation Sans", Arial, sans-serif;
    font-size: 9px;
}
.view-tools {
    position: absolute;
    left: 8px;
    top: 8px;
    display: grid;
    grid-template-columns: repeat(6, 24px);
    grid-auto-rows: 24px;
    gap: 5px;
}
.view-tools svg {
    width: 24px;
    height: 24px;
}
.view-tools button {
    position: relative;
}
.view-tools button:nth-child(n+7) {
    grid-column: 1;
}
.view-tools .on {
    background: #5bbcf0;
}
.view-tools .more::after {
    content: "";
    position: absolute;
    right: -1px;
    bottom: 0;
    border-left: 6px solid transparent;
    border-bottom: 6px solid #111;
}
```
